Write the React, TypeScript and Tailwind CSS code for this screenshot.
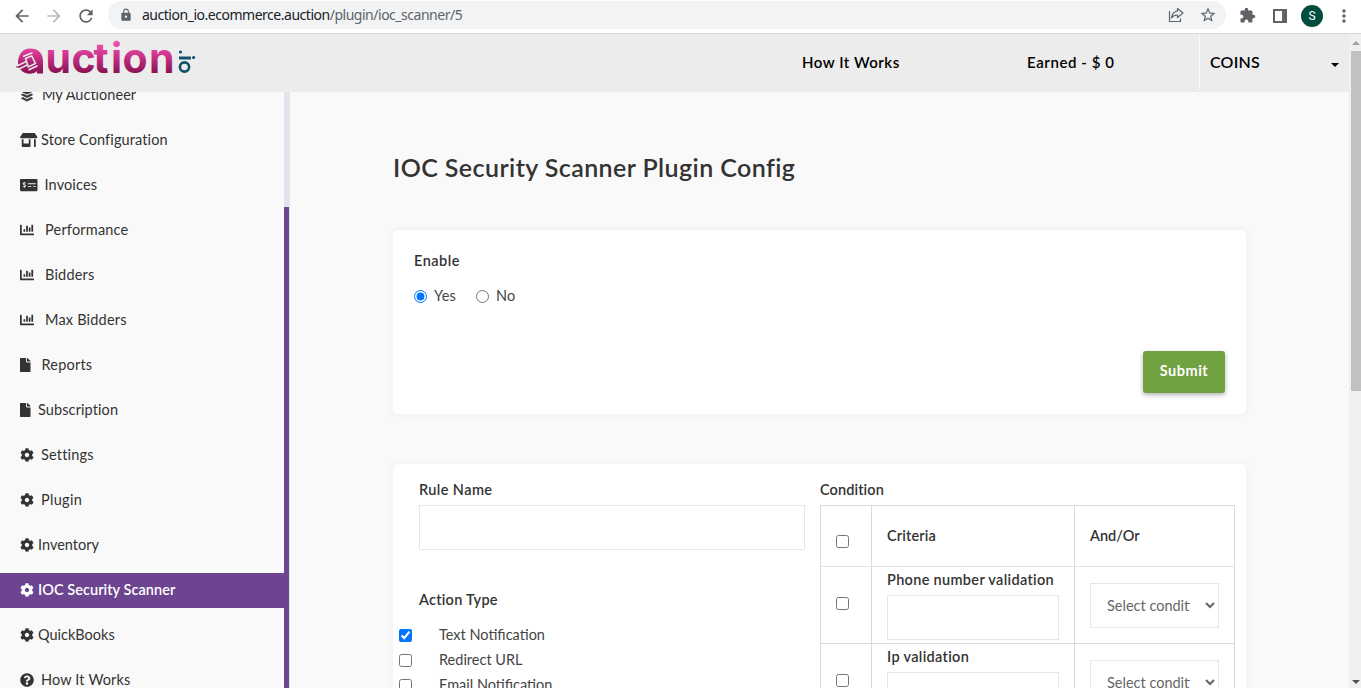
import type { ReactNode } from "react";
import type { IconType } from "react-icons";
import { FaBuffer, FaStoreAlt, FaMoneyCheckAlt, FaChartBar, FaFile, FaCog, FaQuestionCircle } from "react-icons/fa";
import { MdArrowBack, MdArrowForward, MdRefresh, MdLock, MdStarBorder, MdExtension, MdMoreVert } from "react-icons/md";

function BrowserBar() {
  return (
    <div className="flex h-[34px] shrink-0 items-start border-b border-[#d5d7da] bg-white text-[#5f6368]">
      <div className="flex h-[31px] w-[108px] shrink-0 items-center gap-3 pl-3">
        <MdArrowBack size={20} />
        <MdArrowForward size={20} className="text-[#bababc]" />
        <MdRefresh size={20} />
      </div>
      <div className="mt-px flex h-7 w-[1118px] shrink-0 items-center rounded-full bg-[#f1f3f4] pl-[11px] pr-[9px]">
        <MdLock size={14} />
        <span className="ml-[9px] flex-1 whitespace-nowrap font-['Noto_Sans',sans-serif] text-[14px] leading-7 tracking-[-0.48px]">
          <span className="text-[#202124]">auction_io.ecommerce.auction</span>/plugin/ioc_scanner/5
        </span>
        <svg width="16" height="16" viewBox="0 0 16 16" fill="none" stroke="currentColor" strokeWidth="1.2" className="mr-[15px]">
          <path d="M1.500 4V14.500H12.500V11.500" />
          <path d="M9.500 1.500L15 6L9.500 10.500V8C7 8 5 8.700 3.500 11C4 7 6 4.500 9.500 4Z" strokeLinejoin="round" />
        </svg>
        <MdStarBorder size={18} />
      </div>
      <div className="flex h-[31px] flex-1 items-center pl-[13px]">
        <MdExtension size={17} />
        <svg width="14" height="14" viewBox="0 0 14 14" className="ml-[17px]">
          <path d="M1 1H13V13H1Z" fill="none" stroke="currentColor" strokeWidth="2" />
          <path d="M9 1H14V13H9Z" fill="currentColor" />
        </svg>
        <span className="ml-[14px] flex h-[22px] w-[22px] items-center justify-center rounded-full bg-[#004d40] font-['Roboto',sans-serif] text-[12px] text-white">S</span>
        <MdMoreVert size={20} className="ml-[11px]" />
      </div>
    </div>
  );
}

function Logo() {
  return (
    <svg width="184" height="54" viewBox="0 0 184 54" className="ml-[14px] mt-[2px] shrink-0 overflow-visible">
      <defs>
        <linearGradient id="pink" gradientUnits="userSpaceOnUse" x1="0" y1="4" x2="0" y2="38">
          <stop offset="0" stopColor="#f655b2" />
          <stop offset="0.35" stopColor="#d83c97" />
          <stop offset="1" stopColor="#85104f" />
        </linearGradient>
      </defs>
      <path d="M1.500 31L4 29L4 25C5 17 9.500 12.500 16 12.500C24 12.500 29 17 29 25V37.500H23V35C20 38.500 11 39 7 34L5 32Z" fill="url(#pink)" />
      <g fill="none" stroke="#ececec" strokeWidth="1.500">
        <path d="M9 20.500L18.500 16.800" />
        <path d="M11.500 22.500L17.700 19.900L21.500 27.500L14.300 31Z" />
        <path d="M14.500 34L23.500 29.700" />
        <path d="M3 30L12.500 25.300" />
        <path d="M5 33L13.500 28.800" />
      </g>
      <text y="37" x="31.500 57.500 79.500 97 108.500 135" fill="url(#pink)" className="font-['Inter',sans-serif] text-[41px] font-bold">uction</text>
      <g fill="#14506b">
        <circle cx="166.500" cy="16" r="1.600" />
        <path d="M165 20.500H177V23.500H165Z" />
        <circle cx="179.600" cy="21.500" r="1.600" />
        <circle cx="170.500" cy="31" r="4.600" fill="none" stroke="#14506b" strokeWidth="2.600" />
      </g>
    </svg>
  );
}

function Header() {
  return (
    <header className="flex h-[58px] w-[1349px] bg-[#ececec] text-[15px] font-semibold text-black">
      <Logo />
      <span className="ml-[604px] w-[225px] pt-4 leading-6 tracking-[0.52px]">How It Works</span>
      <span className="w-[172px] pt-4 leading-6 tracking-[0.58px]">Earned - $ 0</span>
      <div className="flex h-14 w-[150px] border-l border-[#fafafa] pl-[10px] pt-4">
        <span className="w-[121px] text-[16px] leading-6 tracking-[0.2px]">COINS</span>
        <svg width="8" height="4" viewBox="0 0 8 4" className="mt-[13px]"><path d="M0 0H8L4 4Z" /></svg>
      </div>
    </header>
  );
}

const items: { icon: IconType; label: string; size: string; gap: string; active?: boolean }[] = [
  { icon: FaBuffer, label: "My Auctioneer", size: "w-[14px] stroke-[#333] stroke-[24px]", gap: "ml-[8px] tracking-[0.02px]" },
  { icon: FaStoreAlt, label: "Store Configuration", size: "w-[17.5px]", gap: "ml-[3.5px] tracking-[0.12px]" },
  { icon: FaMoneyCheckAlt, label: "Invoices", size: "w-[17.5px]", gap: "ml-[7px] tracking-[0.12px]" },
  { icon: FaChartBar, label: "Performance", size: "w-[14px]", gap: "ml-[11px] tracking-[0.2px]" },
  { icon: FaChartBar, label: "Bidders", size: "w-[14px]", gap: "ml-[11px] tracking-[0.2px]" },
  { icon: FaChartBar, label: "Max Bidders", size: "w-[14px]", gap: "ml-[11px] tracking-[0.2px]" },
  { icon: FaFile, label: "Reports", size: "w-[10.5px]", gap: "ml-[11px] tracking-[0.2px]" },
  { icon: FaFile, label: "Subscription", size: "w-[10.5px]", gap: "ml-[7.5px] tracking-[0.1px]" },
  { icon: FaCog, label: "Settings", size: "w-[14px]", gap: "ml-[7px] tracking-[0.2px]" },
  { icon: FaCog, label: "Plugin", size: "w-[14px]", gap: "ml-[7px] tracking-[0.3px]" },
  { icon: FaCog, label: "Inventory", size: "w-[14px]", gap: "ml-[4px]" },
  { icon: FaCog, label: "IOC Security Scanner", size: "w-[14px]", gap: "ml-[4px] tracking-[0.05px]", active: true },
  { icon: FaCog, label: "QuickBooks", size: "w-[14px]", gap: "ml-[4px]" },
  { icon: FaQuestionCircle, label: "How It Works", size: "w-[14px]", gap: "ml-[7px] tracking-[0.15px]" },
];

function Sidebar() {
  return (
    <div className="flex w-[290px] shrink-0 overflow-hidden">
      <nav className="-mt-[14px] flex w-[284px] flex-col gap-[10px] text-[14.500px]">
        {items.map(({ icon: Icon, label, size, gap, active }) => (
          <a
            key={label}
            className={
              "flex h-[35px] shrink-0 items-center pb-px pl-5 " +
              (active ? "bg-[#6c448f] font-semibold text-white" : "text-[#333]")
            }
          >
            <Icon className={"h-[14px] shrink-0 " + size} />
            <span className={"whitespace-nowrap leading-5 " + gap}>{label}</span>
          </a>
        ))}
      </nav>
      <div className="w-[6px] bg-[#e1e4ef] pt-[115px]">
        <div className="h-full w-[5px] bg-[#6c448f]" />
      </div>
    </div>
  );
}

function Card({ className, children }: { className: string; children: ReactNode }) {
  return <section className={"w-[853px] rounded-[5px] bg-white shadow-[0_0_8px_rgba(0,0,0,0.05)] " + className}>{children}</section>;
}

function Actions() {
  return (
    <div className="mt-[13px] flex flex-col">
      {["Text Notification", "Redirect URL", "Email Notification"].map((label, i) => (
        <label key={label} className="flex h-[25px] items-center">
          <input type="checkbox" defaultChecked={i === 0} className="m-0 h-[13px] w-[13px]" />
          <span className="ml-[27px] pb-px leading-5 text-[#444]">{label}</span>
        </label>
      ))}
    </div>
  );
}

function ConditionTable() {
  return (
    <div className="mt-[5px] w-[415px] border-l border-t border-[#dbdbdb]">
      <div className="grid h-[61px] grid-cols-[51px_203px_160px] border-b border-[#e4e4e4] font-semibold">
        <div className="border-r border-[#dbdbdb] pl-[15px] pt-[29px]"><input type="checkbox" className="m-0 block h-[13px] w-[13px]" /></div>
        <div className="border-r border-[#dbdbdb] pl-[15px] pt-5 leading-5 tracking-[0.15px]">Criteria</div>
        <div className="border-r border-[#dbdbdb] pl-[15px] pt-5 leading-5">And/Or</div>
      </div>
      {["Phone number validation", "Ip validation"].map((label) => (
        <div key={label} className="grid h-[77px] grid-cols-[51px_203px_160px] border-b border-[#dbdbdb]">
          <div className="border-r border-[#dbdbdb] pl-[15px] pt-[30px]"><input type="checkbox" className="m-0 block h-[13px] w-[13px]" /></div>
          <div className="border-r border-[#dbdbdb] pl-[15px] pt-[3px]">
            <div className="whitespace-nowrap font-semibold leading-5 tracking-[0.32px]">{label}</div>
            <input type="text" className="mt-[5px] block h-[45px] w-[172px] border border-[#e6e6e6]" />
          </div>
          <div className="border-r border-[#dbdbdb] pl-[15px] pt-4">
            <select className="block h-[45px] w-[129px] border border-[#e6e6e6] bg-white pb-px pl-3 pr-[12px] text-[14.500px] text-[#666]">
              <option>Select condition</option>
            </select>
          </div>
        </div>
      ))}
    </div>
  );
}

export default function App() {
  return (
    <div className="flex h-[688px] w-[1361px] flex-col overflow-hidden bg-[#f9f9f9] font-['Lato',sans-serif] text-[14.500px] text-[#333]">
      <BrowserBar />
      <div className="flex min-h-0 flex-1">
        <div className="flex w-[1349px] flex-col">
          <Header />
          <div className="flex min-h-0 flex-1">
            <Sidebar />
            <main className="flex-1 overflow-hidden pl-[103px] pt-[57px]">
              <h1 className="text-[25px] font-semibold leading-9 tracking-[0.42px]">IOC Security Scanner Plugin Config</h1>
              <Card className="mt-[45px] flex h-[184px] flex-col px-[21px] pt-[21px]">
                <div className="font-semibold leading-5 tracking-[0.5px]">Enable</div>
                <div className="mt-[15px] flex items-center leading-5 tracking-[0.2px] text-[#444]">
                  <input type="radio" name="enable" defaultChecked className="m-0 h-[13px] w-[13px]" />
                  <span className="ml-[7px] w-[42px]">Yes</span>
                  <input type="radio" name="enable" className="m-0 h-[13px] w-[13px]" />
                  <span className="ml-[7px]">No</span>
                </div>
                <button className="mt-[45px] h-[42px] w-[82px] self-end rounded-[3px] bg-[#70a241] pb-[2px] font-bold tracking-[0.5px] text-white shadow-[0_2px_5px_rgba(0,0,0,0.3)]">Submit</button>
              </Card>
              <Card className="mt-[50px] flex h-[300px]">
                <div className="w-[427px] pl-[6px] pt-4">
                  <div className="pl-5 font-semibold leading-5 tracking-[0.4px]">Rule Name</div>
                  <input type="text" className="ml-5 mt-[5px] block h-[45px] w-[386px] border border-[#e6e6e6]" />
                  <div className="mt-10 pl-5 font-semibold leading-5 tracking-[0.25px]">Action Type</div>
                  <Actions />
                </div>
                <div className="pt-4">
                  <div className="font-semibold leading-5 tracking-[0.1px]">Condition</div>
                  <ConditionTable />
                </div>
              </Card>
            </main>
          </div>
        </div>
        <div className="flex w-3 flex-col items-end bg-[#f0f0f0]">
          <svg width="10" height="17" viewBox="0 0 10 17"><path d="M1 11L5 7L9 11Z" fill="#a3a3a3" /></svg>
          <div className="h-[340px] w-[10px] bg-[#c1c1c1]" />
          <svg width="10" height="17" viewBox="0 0 10 17" className="mt-auto"><path d="M1 9L5 13L9 9Z" fill="#505050" /></svg>
        </div>
      </div>
    </div>
  );
}
